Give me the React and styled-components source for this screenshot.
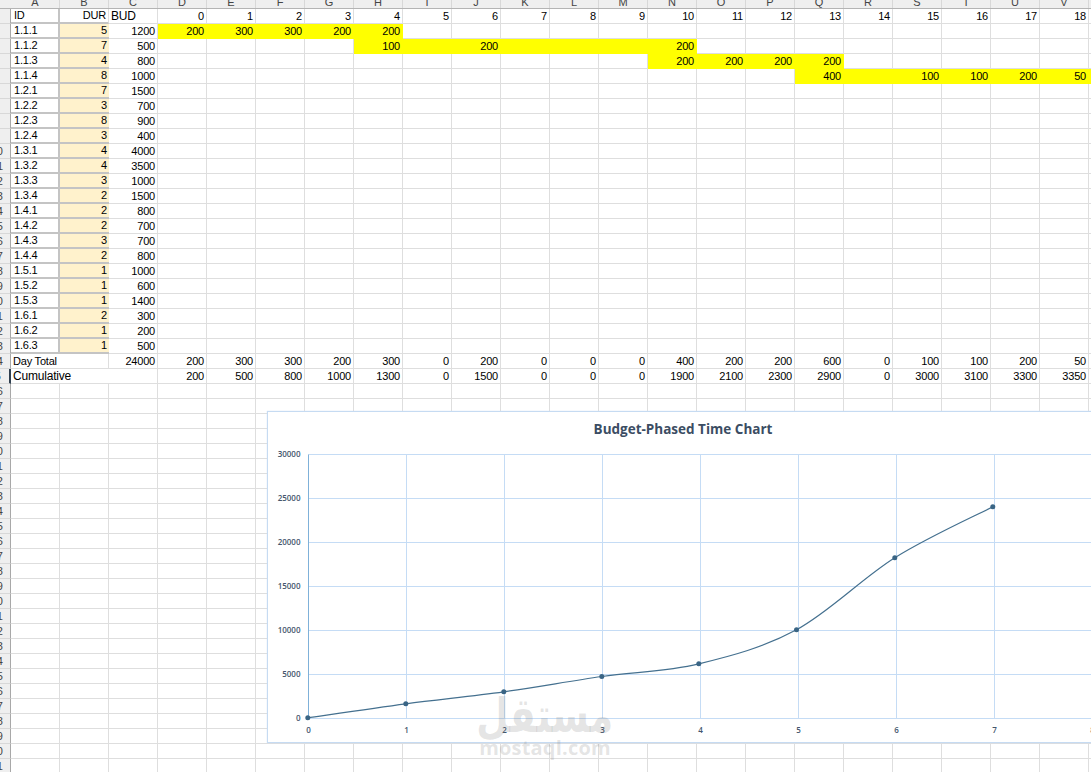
import React from 'react';
import styled, { createGlobalStyle } from 'styled-components';

const GlobalStyle = createGlobalStyle`
  html, body {
    margin: 0;
    padding: 0;
    width: 1091px;
    height: 772px;
    overflow: hidden;
    background: #fff;
  }
`;

const Sheet = styled.div`
  position: relative;
  width: 1091px;
  height: 772px;
  overflow: hidden;
  font-family: "Liberation Sans", Arial, sans-serif;
  font-size: 11px;
  color: #000;
`;

const HeaderRow = styled.div`
  display: flex;
  height: 9px;
  background: #efefef;
  border-bottom: 1px solid #b4b4b4;
  box-sizing: border-box;
  overflow: hidden;
`;

const Corner = styled.div`
  flex: 0 0 11px;
`;

const ColumnHead = styled.div`
  flex: 0 0 49px;
  box-sizing: border-box;
  border-right: 1px solid #d8d8d8;
  display: flex;
  justify-content: center;
  align-items: flex-end;
  height: 8px;
  line-height: 12px;
  font-size: 11px;
  color: #444;
  overflow: hidden;
`;

const Row = styled.div`
  display: flex;
  height: 15px;
`;

const RowHead = styled.div`
  flex: 0 0 11px;
  box-sizing: border-box;
  background: #efefef;
  border-right: 1px solid #a8a8a8;
  border-bottom: 1px solid #d8d8d8;
  display: flex;
  justify-content: flex-end;
  align-items: center;
  padding-right: 7px;
  font-size: 11px;
  color: #444;
  overflow: hidden;
  white-space: nowrap;
  ${(p) => p.$active && 'border-right: 2px solid #2f3f4f; padding-right: 8px;'}
`;

const Cell = styled.div`
  flex: 0 0 ${(p) => (p.$span || 1) * 49}px;
  box-sizing: border-box;
  height: 15px;
  padding: 0 2px;
  line-height: 14px;
  white-space: nowrap;
  overflow: hidden;
  text-align: ${(p) => (p.$left ? 'left' : 'right')};
  font-size: ${(p) => (p.$big ? 12 : 11)}px;
  letter-spacing: -0.2px;
  border-right: 1px solid #dedede;
  border-bottom: 1px solid #dedede;
  background: #fff;
  ${(p) =>
    p.$fill &&
    `
    background: ${p.$fill};
    border-right-color: ${p.$fill};
    border-bottom-color: ${p.$fill};
  `}
  ${(p) =>
    p.$task &&
    `
    border-right: 2px solid #c4c4c4;
    border-bottom: 2px solid #c4c4c4;
    padding-left: 3px;
    line-height: 13px;
  `}
  ${(p) =>
    p.$ruled &&
    `
    border-bottom: 2px solid #c4c4c4;
    line-height: 13px;
  `}
  ${(p) =>
    p.$dur &&
    `
    background: #fff2cc;
    border-right: 0;
  `}
`;

const Edge = styled(Cell)`
  flex: 0 0 3px;
  padding: 0;
  border-right: 0;
`;

const ChartCard = styled.div`
  position: absolute;
  left: 267px;
  top: 411px;
  width: 830px;
  height: 332px;
  box-sizing: border-box;
  background: #fff;
  border: 1px solid #c6dbf2;
  box-shadow: 0 0 1px #c6dbf2;
`;

const ChartTitle = styled.div`
  padding-top: 8px;
  height: 24px;
  box-sizing: border-box;
  text-align: center;
  width: 830px;
  font-family: "Open Sans", Lato, sans-serif;
  font-weight: 700;
  font-size: 13.5px;
  line-height: 18px;
  color: #3b4d63;
`;

const Plot = styled.svg`
  display: block;
  font-family: "Open Sans", Lato, sans-serif;
  font-size: 8px;
  font-weight: 600;
  fill: #44566c;
`;

const Watermark = styled.div`
  position: absolute;
  left: 470px;
  top: 693px;
  width: 150px;
  display: flex;
  flex-direction: column;
  align-items: center;
  color: rgba(120, 120, 120, 0.2);
  font-weight: 700;
  pointer-events: none;
`;

const WatermarkArabic = styled.div`
  font-family: "DejaVu Sans", sans-serif;
  font-size: 48px;
  line-height: 44px;
  transform: scaleX(0.78);
`;

const WatermarkLatin = styled.div`
  font-family: "Open Sans", sans-serif;
  font-size: 20px;
  line-height: 22px;
  letter-spacing: 0.2px;
`;

const letters = 'ABCDEFGHIJKLMNOPQRSTUVW'.split('');

const tasks = [
  ['1.1.1', 5, 1200],
  ['1.1.2', 7, 500],
  ['1.1.3', 4, 800],
  ['1.1.4', 8, 1000],
  ['1.2.1', 7, 1500],
  ['1.2.2', 3, 700],
  ['1.2.3', 8, 900],
  ['1.2.4', 3, 400],
  ['1.3.1', 4, 4000],
  ['1.3.2', 4, 3500],
  ['1.3.3', 3, 1000],
  ['1.3.4', 2, 1500],
  ['1.4.1', 2, 800],
  ['1.4.2', 2, 700],
  ['1.4.3', 3, 700],
  ['1.4.4', 2, 800],
  ['1.5.1', 1, 1000],
  ['1.5.2', 1, 600],
  ['1.5.3', 1, 1400],
  ['1.6.1', 2, 300],
  ['1.6.2', 1, 200],
  ['1.6.3', 1, 500],
];

const days = Array.from({ length: 19 }, (_, i) => i);

// yellow bars: first day, last day, spend per day
const bars = {
  0: { from: 0, to: 4, spend: { 0: 200, 1: 300, 2: 300, 3: 200, 4: 200 } },
  1: { from: 4, to: 10, spend: { 4: 100, 6: 200, 10: 200 } },
  2: { from: 10, to: 13, spend: { 10: 200, 11: 200, 12: 200, 13: 200 } },
  3: { from: 13, to: 19, spend: { 13: 400, 15: 100, 16: 100, 17: 200, 18: 50 } },
};

const dayTotal = [200, 300, 300, 200, 300, 0, 200, 0, 0, 0, 400, 200, 200, 600, 0, 100, 100, 200, 50];
const cumulative = [200, 500, 800, 1000, 1300, 0, 1500, 0, 0, 0, 1900, 2100, 2300, 2900, 0, 3000, 3100, 3300, 3350];

const YELLOW = '#ffff00';
const TOTAL_ROWS = 51;

const RowLabel = ({ n, active }) => <RowHead $active={active}>{n >= 10 ? n : ''}</RowHead>;

const SheetRow = ({ n }) => {
  if (n === 1) {
    return (
      <Row>
        <RowLabel n={n} />
        <Cell $task $left>ID</Cell>
        <Cell $ruled>DUR</Cell>
        <Cell $left $big>BUD</Cell>
        {days.map((d) => (
          <Cell key={d}>{d}</Cell>
        ))}
        <Edge />
      </Row>
    );
  }
  if (n >= 2 && n <= 23) {
    const [id, dur, bud] = tasks[n - 2];
    const bar = bars[n - 2];
    const inBar = (d) => bar && d >= bar.from && d <= bar.to;
    return (
      <Row>
        <RowLabel n={n} />
        <Cell $task $left>{id}</Cell>
        <Cell $ruled $dur>{dur}</Cell>
        <Cell>{bud}</Cell>
        {days.map((d) => (
          <Cell key={d} $fill={inBar(d) ? YELLOW : undefined}>
            {bar && bar.spend[d]}
          </Cell>
        ))}
        <Edge $fill={bar && bar.to === 19 ? YELLOW : undefined} />
      </Row>
    );
  }
  if (n === 24) {
    return (
      <Row>
        <RowLabel n={n} />
        <Cell $left $span={2}>Day Total</Cell>
        <Cell>24000</Cell>
        {dayTotal.map((v, i) => (
          <Cell key={i}>{v}</Cell>
        ))}
        <Edge />
      </Row>
    );
  }
  if (n === 25) {
    return (
      <Row>
        <RowLabel n={n} active />
        <Cell $left $big $span={3}>Cumulative</Cell>
        {cumulative.map((v, i) => (
          <Cell key={i}>{v}</Cell>
        ))}
        <Edge />
      </Row>
    );
  }
  return (
    <Row>
      <RowLabel n={n} />
      {letters.slice(0, 22).map((c) => (
        <Cell key={c} />
      ))}
      <Edge />
    </Row>
  );
};

// measured marker positions in chart card coordinates
const points = [
  [39.8, 305.8],
  [137.8, 291.8],
  [235.8, 279.8],
  [333.8, 264.5],
  [430.8, 251.8],
  [528.5, 217.8],
  [626.8, 145.8],
  [724.8, 94.8],
];

// Catmull-Rom through the points, same look as a smoothed Excel line
const smoothPath = (pts) => {
  let d = `M${pts[0][0]} ${pts[0][1]}`;
  for (let i = 0; i < pts.length - 1; i++) {
    const p0 = pts[i - 1] || pts[i];
    const p1 = pts[i];
    const p2 = pts[i + 1];
    const p3 = pts[i + 2] || p2;
    const c1x = p1[0] + (p2[0] - p0[0]) / 6;
    const c1y = p1[1] + (p2[1] - p0[1]) / 6;
    const c2x = p2[0] - (p3[0] - p1[0]) / 6;
    const c2y = p2[1] - (p3[1] - p1[1]) / 6;
    d += ` C${c1x} ${c1y} ${c2x} ${c2y} ${p2[0]} ${p2[1]}`;
  }
  return d;
};

const AXIS_X = 40.5;
const ZERO_Y = 306.5;
const STEP_X = 98;
const STEP_Y = 44;
const yTicks = [0, 5000, 10000, 15000, 20000, 25000, 30000];
const xTicks = [0, 1, 2, 3, 4, 5, 6, 7, 8];

const BudgetChart = () => (
  <ChartCard>
    <ChartTitle>Budget-Phased Time Chart</ChartTitle>
    <Plot width="830" height="306" viewBox="0 24 830 306">
      {yTicks.map((t, i) => (
        <g key={t}>
          <line x1={AXIS_X} x2="830" y1={ZERO_Y - i * STEP_Y} y2={ZERO_Y - i * STEP_Y} stroke="#c5dcf5" />
          <text x={AXIS_X - 8} y={ZERO_Y - i * STEP_Y + 2.5} textAnchor="end">{t}</text>
        </g>
      ))}
      {xTicks.map((t) => (
        <g key={t}>
          <line
            x1={AXIS_X + t * STEP_X}
            x2={AXIS_X + t * STEP_X}
            y1={ZERO_Y - 6 * STEP_Y}
            y2={ZERO_Y}
            stroke={t === 0 ? '#7fb1d9' : '#c5dcf5'}
          />
          <text x={AXIS_X + t * STEP_X} y={ZERO_Y + 14.5} textAnchor="middle">{t}</text>
        </g>
      ))}
      <path d={smoothPath(points)} fill="none" stroke="#44708f" strokeWidth="1.2" />
      {points.map(([x, y]) => (
        <circle key={x} cx={x} cy={y} r="2.5" fill="#3a6585" />
      ))}
    </Plot>
  </ChartCard>
);

export default function App() {
  return (
    <Sheet>
      <GlobalStyle />
      <HeaderRow>
        <Corner />
        {letters.map((c) => (
          <ColumnHead key={c}>{c}</ColumnHead>
        ))}
      </HeaderRow>
      {Array.from({ length: TOTAL_ROWS }, (_, i) => (
        <SheetRow key={i} n={i + 1} />
      ))}
      <BudgetChart />
      <Watermark>
        <WatermarkArabic>مستقل</WatermarkArabic>
        <WatermarkLatin>mostaql.com</WatermarkLatin>
      </Watermark>
    </Sheet>
  );
}
